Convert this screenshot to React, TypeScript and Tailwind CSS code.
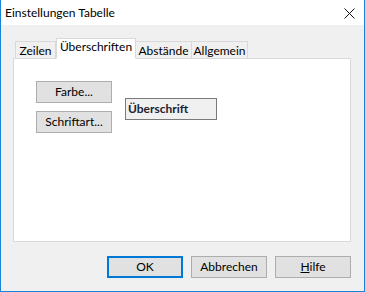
import React from 'react';

const TABS = [
  { id: 'zeilen', label: 'Zeilen', width: 'w-[41px]' },
  { id: 'ueberschriften', label: 'Überschriften', width: 'w-[80px]' },
  { id: 'abstaende', label: 'Abstände', width: 'w-[57px]' },
  { id: 'allgemein', label: 'Allgemein', width: 'w-[57px]' },
];

function DialogButton({
  children,
  primary = false,
}: {
  children: React.ReactNode;
  primary?: boolean;
}) {
  return (
    <button
      type="button"
      className={
        'flex h-[22px] w-[76px] items-center justify-center bg-[#e1e1e1] text-[12px] text-black ' +
        (primary ? 'border-2 border-[#0078d7]' : 'border border-[#adadad]')
      }
    >
      {children}
    </button>
  );
}

export default function App() {
  return (
    <div
      className="flex h-[292px] w-[365px] flex-col border-x border-b border-[#1883d7] bg-[#f0f0f0] text-black"
      style={{ fontFamily: '"Segoe UI", Lato, "Noto Sans", sans-serif' }}
    >
      {/* title bar */}
      <div className="flex h-[26px] items-center justify-between bg-white pl-[4px] pr-[9px]">
        <span className="text-[12px]">Einstellungen Tabelle</span>
        <svg width="11" height="11" viewBox="0 0 11 11" className="mt-[1px]">
          <path d="M0.5 0.5 L10.5 10.5 M10.5 0.5 L0.5 10.5" stroke="#111" strokeWidth="1" fill="none" />
        </svg>
      </div>

      <div className="flex flex-1 flex-col pl-[12px] pr-[13px] pt-[12px] pb-[13px]">
        {/* tabs */}
        <div className="relative z-10 flex h-[21px] items-end pl-[2px]">
          {TABS.map((tab) => {
            const active = tab.id === 'ueberschriften';
            return (
              <div
                key={tab.id}
                className={
                  'flex items-center justify-center whitespace-nowrap border border-[#d9d9d9] text-[12px] ' +
                  tab.width +
                  (active
                    ? ' -mb-px h-[21px] border-b-white bg-white pb-[3px]'
                    : ' -ml-px h-[17px] border-b-0 bg-[#f0f0f0] pt-[1px] first:ml-0')
                }
              >
                {tab.label}
              </div>
            );
          })}
        </div>

        {/* panel */}
        <div className="flex h-[184px] border border-[#d9d9d9] bg-white pl-[22px] pt-[22px]">
          <div className="flex items-center gap-[13px] self-start">
            <div className="flex flex-col gap-[8px]">
              <DialogButton>Farbe...</DialogButton>
              <DialogButton>Schriftart...</DialogButton>
            </div>
            <div className="mt-[4px] flex h-[22px] w-[92px] items-center border border-[#7a7a7a] bg-[#f0f0f0] pl-[2px] text-[12px] font-bold text-[#1b2233]">
              Überschrift
            </div>
          </div>
        </div>

        {/* footer buttons */}
        <div className="mt-[14px] flex justify-end gap-[8px]">
          <DialogButton primary>OK</DialogButton>
          <DialogButton>Abbrechen</DialogButton>
          <DialogButton>
            <span>
              <span className="underline">H</span>ilfe
            </span>
          </DialogButton>
        </div>
      </div>
    </div>
  );
}
